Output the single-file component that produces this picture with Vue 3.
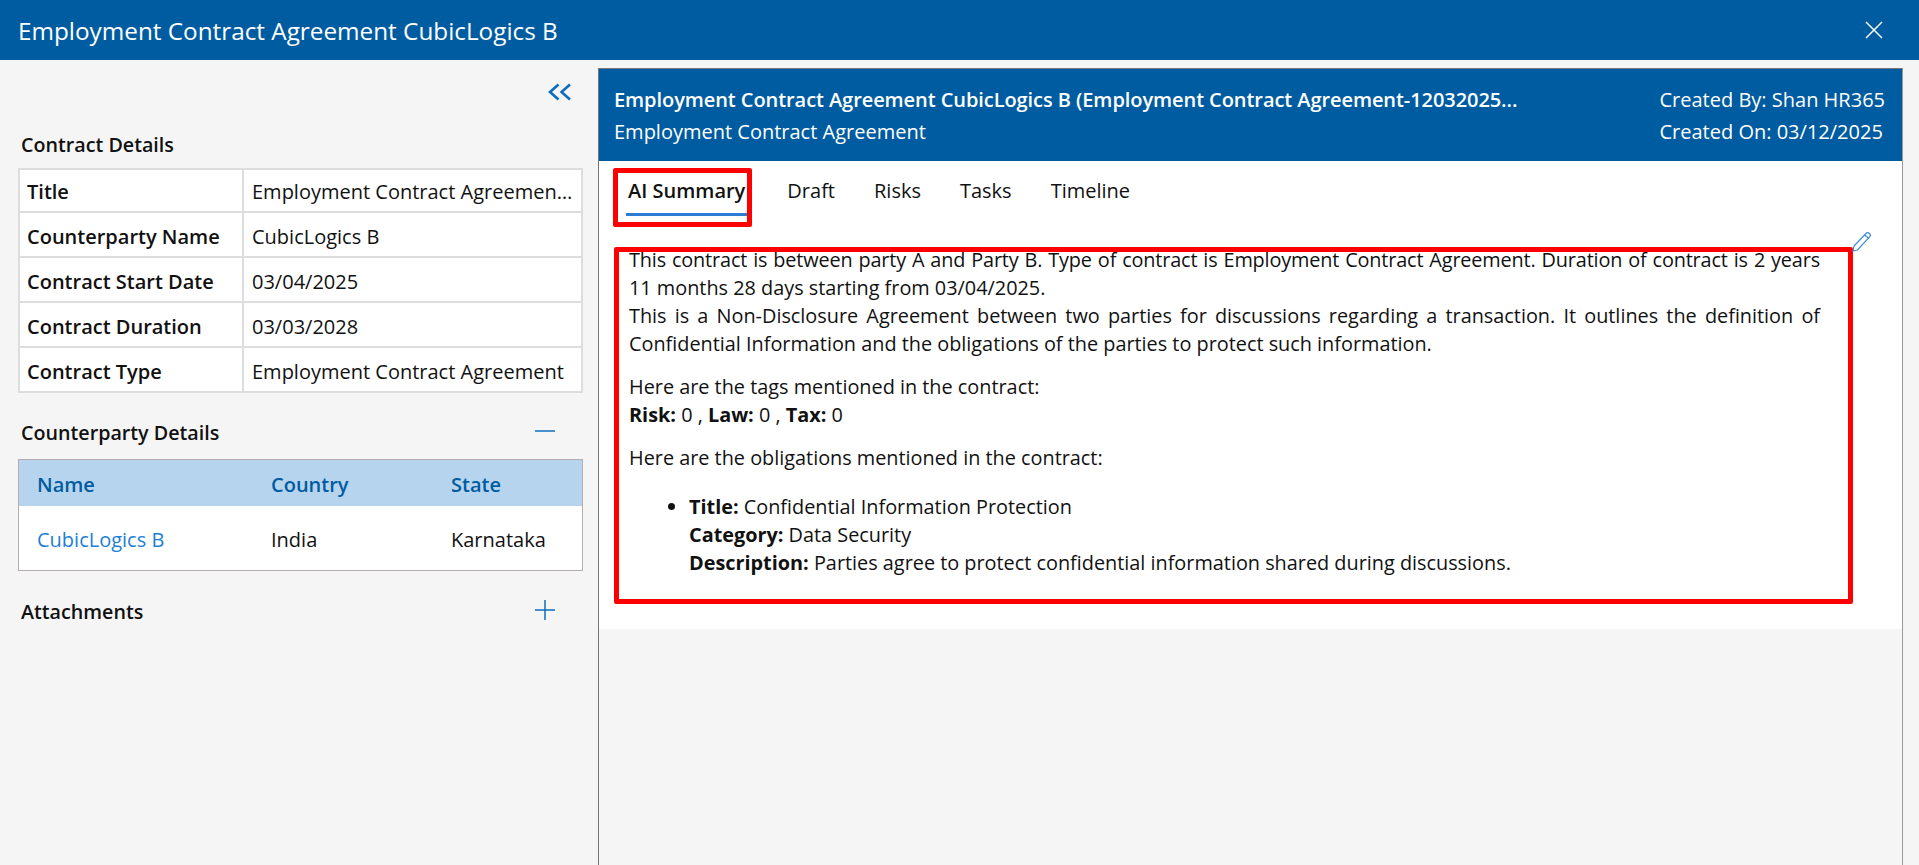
<template>
  <div class="page">
    <header class="topbar">
      <span class="topbar-title">Employment Contract Agreement CubicLogics B</span>
      <button class="close-btn" aria-label="Close">
        <svg width="18" height="18" viewBox="0 0 18 18"><path d="M1 1l16 16M17 1L1 17" stroke="#fff" stroke-width="1.5" fill="none" /></svg>
      </button>
    </header>

    <div class="main">
      <aside class="sidebar">
        <div class="collapse-row">
          <svg width="24" height="18" viewBox="0 0 24 18"><path d="M10.5 1.5L2 9l8.500 7.500M22 1.500L13.500 9l8.500 7.500" stroke="#0f6cbd" stroke-width="2.600" fill="none" /></svg>
        </div>

        <h3 class="section-title first">Contract Details</h3>
        <div class="details">
          <div v-for="row in details" :key="row.label" class="detail-row">
            <div class="detail-label">{{ row.label }}</div>
            <div class="detail-value">{{ row.value }}</div>
          </div>
        </div>

        <div class="section-head">
          <h3 class="section-title">Counterparty Details</h3>
          <svg width="20" height="20" viewBox="0 0 20 20"><path d="M0 10h20" stroke="#0f6cbd" stroke-width="1.500" fill="none" /></svg>
        </div>
        <div class="grid">
          <div class="grid-row grid-head">
            <span>Name</span>
            <span>Country</span>
            <span>State</span>
          </div>
          <div class="grid-row grid-body">
            <a class="link">CubicLogics B</a>
            <span>India</span>
            <span>Karnataka</span>
          </div>
        </div>

        <div class="section-head attachments">
          <h3 class="section-title">Attachments</h3>
          <svg width="20" height="20" viewBox="0 0 20 20"><path d="M0 10h20M10 0v20" stroke="#0f6cbd" stroke-width="1.500" fill="none" /></svg>
        </div>
      </aside>

      <section class="panel">
        <div class="panel-head">
          <div class="panel-titles">
            <div class="panel-title">Employment Contract Agreement CubicLogics B (Employment Contract Agreement-12032025...</div>
            <div class="panel-sub">Employment Contract Agreement</div>
          </div>
          <div class="panel-meta">
            <div>Created By: Shan HR365</div>
            <div>Created On: 03/12/2025</div>
          </div>
        </div>

        <div class="panel-body">
          <nav class="tabs">
            <div v-for="tab in tabs" :key="tab" class="tab" :class="{ active: tab === 'AI Summary' }">
              {{ tab }}
              <span v-if="tab === 'AI Summary'" class="mark mark-tab"></span>
            </div>
          </nav>

          <div class="summary">
            <span class="mark mark-summary"></span>
            <svg class="pencil" width="22" height="22" viewBox="0 0 22 22"><path d="M2 20l1-5L15 2.500c1-1 2.300-1 3.400 0s1.200 2.300 .2 3.400L6.500 19z M13.500 4l4.600 3.500" stroke="#3b8ad9" stroke-width="1.200" fill="none" /></svg>
            <p class="just"><span class="tight">This contract is between party A and Party B. Type of contract is Employment Contract Agreement. Duration of contract is 2 years</span> 11 months 28 days starting from 03/04/2025.<br />This is a Non-Disclosure Agreement between two parties for discussions regarding a transaction. It outlines the definition of Confidential Information and the obligations of the parties to protect such information.</p>
            <p>Here are the tags mentioned in the contract:<br /><b>Risk:</b> 0 , <b>Law:</b> 0 , <b>Tax:</b> 0</p>
            <p>Here are the obligations mentioned in the contract:</p>
            <ul>
              <li><b>Title:</b> Confidential Information Protection<br /><b>Category:</b> Data Security<br /><b>Description:</b> Parties agree to protect confidential information shared during discussions.</li>
            </ul>
          </div>
        </div>
      </section>
    </div>
  </div>
</template>

<script setup>
const details = [
  { label: 'Title', value: 'Employment Contract Agreemen…' },
  { label: 'Counterparty Name', value: 'CubicLogics B' },
  { label: 'Contract Start Date', value: '03/04/2025' },
  { label: 'Contract Duration', value: '03/03/2028' },
  { label: 'Contract Type', value: 'Employment Contract Agreement' },
]

const tabs = ['AI Summary', 'Draft', 'Risks', 'Tasks', 'Timeline']
</script>

<style>
html, body {
  margin: 0;
  background: #f5f5f5;
}
</style>

<style scoped>
.page {
  height: 865px;
  overflow: hidden;
  display: flex;
  flex-direction: column;
  font-family: "Open Sans", "Noto Sans", sans-serif;
  font-size: 20px;
  color: #111;
  background: #f5f5f5;
}

.topbar {
  height: 60px;
  flex: none;
  display: flex;
  align-items: center;
  justify-content: space-between;
  padding: 0 36px 0 18px;
  background: #005ca1;
  color: #fff;
}

.topbar-title {
  font-size: 24.3px;
}

.close-btn {
  display: flex;
  padding: 0;
  border: 0;
  background: none;
}

.main {
  flex: 1;
  display: flex;
  padding-top: 8px;
  min-height: 0;
}

.sidebar {
  width: 598px;
  flex: none;
  box-sizing: border-box;
  padding: 15px 15px 0 18px;
}

.collapse-row {
  display: flex;
  justify-content: flex-end;
  padding-right: 11px;
  height: 18px;
}

.section-title {
  margin: 0;
  font-size: 19.7px;
  font-weight: 600;
  line-height: 24px;
  padding-left: 3px;
}

.section-title.first {
  margin-top: 32px;
  margin-bottom: 11px;
}

.details {
  border-top: 2px solid #ddd;
  border-left: 2px solid #ddd;
  border-right: 2px solid #ddd;
  background: #fff;
}

.detail-row {
  display: flex;
  height: 43px;
  border-bottom: 2px solid #ddd;
  line-height: 39px;
}

.detail-row:first-child {
  height: 41px;
}

.detail-row:first-child > div {
  padding-top: 2px;
}

.detail-label {
  width: 224px;
  flex: none;
  box-sizing: border-box;
  padding: 4px 0 0 7px;
  font-weight: 600;
  border-right: 2px solid #ddd;
}

.detail-value {
  flex: 1;
  min-width: 0;
  padding: 4px 8px 0;
  white-space: nowrap;
}

.section-head {
  display: flex;
  align-items: center;
  justify-content: space-between;
  padding-right: 28px;
  margin-top: 28px;
  height: 24px;
}

.section-head svg {
  margin-bottom: 4px;
}

.grid {
  margin-top: 14px;
  border: 1px solid #b5adb0;
  background: #fff;
}

.grid-row {
  display: grid;
  grid-template-columns: 234px 180px 1fr;
  box-sizing: border-box;
  padding: 2px 0 0 18px;
  align-items: center;
}

.grid-head {
  height: 46px;
  background: #b7d4ee;
  color: #005ca1;
  font-weight: 600;
}

.grid-body {
  height: 64px;
}

.link {
  color: #1d7fd6;
}

.section-head.attachments {
  margin-top: 29px;
}

.panel {
  flex: 1;
  display: flex;
  flex-direction: column;
  margin-right: 16px;
  border-left: 1px solid #777;
  border-right: 1px solid #999;
  border-top: 1px solid #777;
  min-width: 0;
}

.panel-head {
  height: 92px;
  flex: none;
  box-sizing: border-box;
  display: flex;
  justify-content: space-between;
  padding: 15px 17px 0 15px;
  background: #005ca1;
  color: #fff;
  line-height: 32px;
}

.panel-titles {
  min-width: 0;
}

.panel-title {
  font-weight: 600;
  white-space: nowrap;
  letter-spacing: -0.07px;
}

.panel-meta {
  flex: none;
}

.panel-body {
  background: #fff;
  height: 468px;
  flex: none;
  box-sizing: border-box;
  padding: 0 0 0 15px;
}

.tabs {
  display: flex;
  gap: 35px;
  padding: 12px 0 0 12px;
}

.tab {
  position: relative;
  height: 40px;
  line-height: 36px;
  padding: 0 2px;
}

.tab.active {
  font-weight: 600;
  border-bottom: 3px solid #2b7cd3;
  margin-right: 3px;
}

.mark {
  position: absolute;
  border: 5px solid #f00;
  border-radius: 2px;
  box-sizing: border-box;
  pointer-events: none;
}

.mark-tab {
  left: -13px;
  top: -5px;
  width: 139px;
  height: 59px;
}

.summary {
  position: relative;
  width: 1191px;
  margin-top: 30px;
  padding: 0 0 0 15px;
  font-size: 19.85px;
  line-height: 28px;
}

.mark-summary {
  left: 0;
  top: 1px;
  width: 1239px;
  height: 357px;
}

.pencil {
  position: absolute;
  left: 1237px;
  top: -15px;
}

.summary p {
  margin: 0 0 15px;
}

.summary .just {
  text-align: justify;
}

.tight {
  letter-spacing: -0.15px;
}

.summary b {
  font-weight: 700;
}

.summary ul {
  margin: 21px 0 0;
  padding-left: 60px;
}
</style>
